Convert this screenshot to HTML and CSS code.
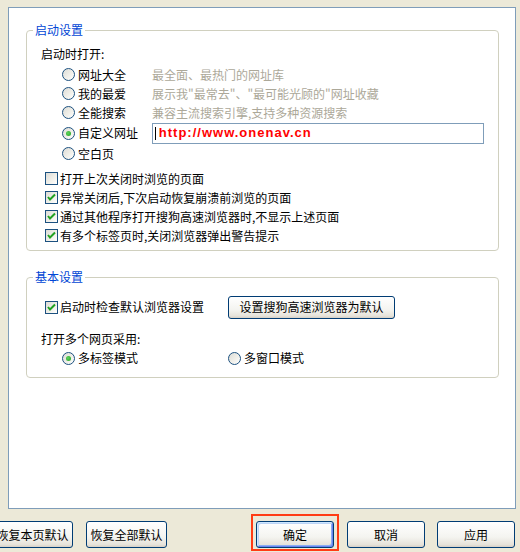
FILE: index.html
```html
<!DOCTYPE html>
<html lang="zh-CN">
<head>
  <meta charset="UTF-8">
  <title>选项 - 常规</title>
  <link rel="stylesheet" href="styles.css">
</head>
<body>
  <div class="panel">
    <fieldset class="group group-start">
      <legend>启动设置</legend>
      <div class="title">启动时打开:</div>
      <div class="choices">
        <div class="choice"><span class="radio"></span><span class="choice-name">网址大全</span><span class="hint">最全面、最热门的网址库</span></div>
        <div class="choice"><span class="radio"></span><span class="choice-name">我的最爱</span><span class="hint">展示我"最常去"、"最可能光顾的"网址收藏</span></div>
        <div class="choice"><span class="radio"></span><span class="choice-name">全能搜索</span><span class="hint">兼容主流搜索引擎,支持多种资源搜索</span></div>
        <div class="choice choice-url"><span class="radio on"></span><span class="choice-name">自定义网址</span><div class="url-box"><span class="caret"></span>http://www.onenav.cn</div></div>
        <div class="choice"><span class="radio"></span><span class="choice-name">空白页</span></div>
      </div>
      <div class="checks">
        <div class="check-row"><span class="check"></span>打开上次关闭时浏览的页面</div>
        <div class="check-row"><span class="check on"><svg viewBox="0 0 11 11" width="11" height="11"><path d="M2 5 L4 7.5 L9 2.5" fill="none" stroke="#21a121" stroke-width="2"/></svg></span>异常关闭后,下次启动恢复崩溃前浏览的页面</div>
        <div class="check-row"><span class="check on"><svg viewBox="0 0 11 11" width="11" height="11"><path d="M2 5 L4 7.5 L9 2.5" fill="none" stroke="#21a121" stroke-width="2"/></svg></span>通过其他程序打开搜狗高速浏览器时,不显示上述页面</div>
        <div class="check-row"><span class="check on"><svg viewBox="0 0 11 11" width="11" height="11"><path d="M2 5 L4 7.5 L9 2.5" fill="none" stroke="#21a121" stroke-width="2"/></svg></span>有多个标签页时,关闭浏览器弹出警告提示</div>
      </div>
    </fieldset>

    <fieldset class="group group-basic">
      <legend>基本设置</legend>
      <div class="default-row">
        <div class="check-row default-check"><span class="check on"><svg viewBox="0 0 11 11" width="11" height="11"><path d="M2 5 L4 7.5 L9 2.5" fill="none" stroke="#21a121" stroke-width="2"/></svg></span>启动时检查默认浏览器设置</div>
        <button class="btn btn-default-browser">设置搜狗高速浏览器为默认</button>
      </div>
      <div class="title multi-title">打开多个网页采用:</div>
      <div class="modes">
        <div class="choice mode"><span class="radio on"></span>多标签模式</div>
        <div class="choice mode"><span class="radio"></span>多窗口模式</div>
      </div>
    </fieldset>
  </div>

  <div class="footer">
    <button class="btn btn-wide btn-first">恢复本页默认</button>
    <button class="btn btn-wide btn-second">恢复全部默认</button>
    <div class="mark">
      <button class="btn btn-ok">确定</button>
    </div>
    <button class="btn btn-cancel">取消</button>
    <button class="btn btn-apply">应用</button>
  </div>
</body>
</html>
```

FILE: styles.css
```css
body {
  margin: 0;
  width: 520px;
  height: 552px;
  overflow: hidden;
  background-color: #ece9d8;
  color: #000000;
  font-family: "Noto Sans CJK SC", "Liberation Sans", sans-serif;
  font-size: 12px;
  line-height: 16px;
}

.panel {
  margin: 7px 0 0 8px;
  width: 506px;
  height: 500px;
  border: 1px solid #7f9db9;
  background-color: #ffffff;
  overflow: hidden;
}

.group {
  margin: 0 16px 0 17px;
  padding: 0 14px 5px 14px;
  border: 1px solid #d0d0bf;
  border-radius: 4px;
  min-width: 0;
}

.group legend {
  margin-left: -8px;
  padding: 0 2px;
  color: #0046d5;
  line-height: 16px;
}

.group-start {
  margin-top: 14px;
}

.group-basic {
  margin-top: 18px;
  padding-bottom: 10px;
}

.title {
  margin-top: 8px;
  height: 16px;
}

.choices {
  margin: 3px 0 0 21px;
}

.choice {
  display: flex;
  align-items: center;
  height: 19px;
}

.choice-url {
  height: 22px;
}

.choice-name {
  width: 74px;
}

.hint {
  color: #aca899;
}

.radio {
  box-sizing: border-box;
  width: 13px;
  height: 13px;
  margin-right: 3px;
  border: 1px solid #1c5180;
  border-radius: 50%;
  background: linear-gradient(135deg, #dcdcd7 0%, #f0efe9 55%, #ffffff 100%);
  display: flex;
  align-items: center;
  justify-content: center;
  flex: none;
}

.radio.on::after {
  content: "";
  width: 5px;
  height: 5px;
  border-radius: 50%;
  background: radial-gradient(circle at 40% 40%, #5ed35e, #21a121);
}

.url-box {
  box-sizing: border-box;
  width: 333px;
  height: 21px;
  border: 1px solid #7f9db9;
  display: flex;
  align-items: center;
  padding-left: 2px;
  color: #ff0000;
  font-family: "Liberation Sans", sans-serif;
  font-size: 13px;
  font-weight: bold;
  letter-spacing: 1px;
}

.caret {
  width: 1px;
  height: 13px;
  margin-right: 3px;
  background-color: #000000;
}

.checks {
  margin: 6px 0 0 4px;
}

.check-row {
  display: flex;
  align-items: center;
  height: 19px;
}

.check {
  box-sizing: border-box;
  width: 13px;
  height: 13px;
  margin-right: 2px;
  border: 1px solid #1c5180;
  background: linear-gradient(135deg, #dcdcd7 0%, #f0efe9 55%, #ffffff 100%);
  display: flex;
  align-items: center;
  justify-content: center;
  flex: none;
}

.check svg {
  display: block;
}

.default-row {
  display: flex;
  align-items: center;
  height: 24px;
  margin: 10px 0 0 4px;
}

.default-check {
  width: 183px;
}

.multi-title {
  margin-top: 12px;
}

.modes {
  display: flex;
  margin: 2px 0 0 21px;
}

.mode {
  width: 166px;
  height: 18px;
}

.btn {
  box-sizing: border-box;
  height: 27px;
  padding: 0;
  border: 1px solid #003c74;
  border-radius: 3px;
  background: linear-gradient(#ffffff 0%, #f4f4f0 60%, #e6e3da 90%, #d6d0c5 100%);
  color: #000000;
  font-family: "Noto Sans CJK SC", "Liberation Sans", sans-serif;
  font-size: 12px;
  line-height: 16px;
  flex: none;
}

.btn-default-browser {
  width: 167px;
  height: 23px;
}

.footer {
  display: flex;
  align-items: flex-start;
  margin-top: 5px;
}

.btn-wide {
  width: 81px;
  margin-top: 7px;
}

.btn-first {
  margin-left: -8px;
}

.btn-second {
  margin-left: 13px;
}

.mark {
  margin-left: 84px;
  padding: 5px 3px 1px 3px;
  border: 2px solid #ff3c14;
}

.btn-ok {
  display: block;
  width: 78px;
  box-shadow: inset 1px 1px 0 #cee7ff, inset -1px -1px 0 #6982ee, inset 2px 2px 0 #bcd4f6, inset -2px -2px 0 #89adf4;
}

.btn-cancel {
  width: 78px;
  margin: 7px 0 0 8px;
}

.btn-apply {
  width: 78px;
  margin: 7px 0 0 12px;
}
```
